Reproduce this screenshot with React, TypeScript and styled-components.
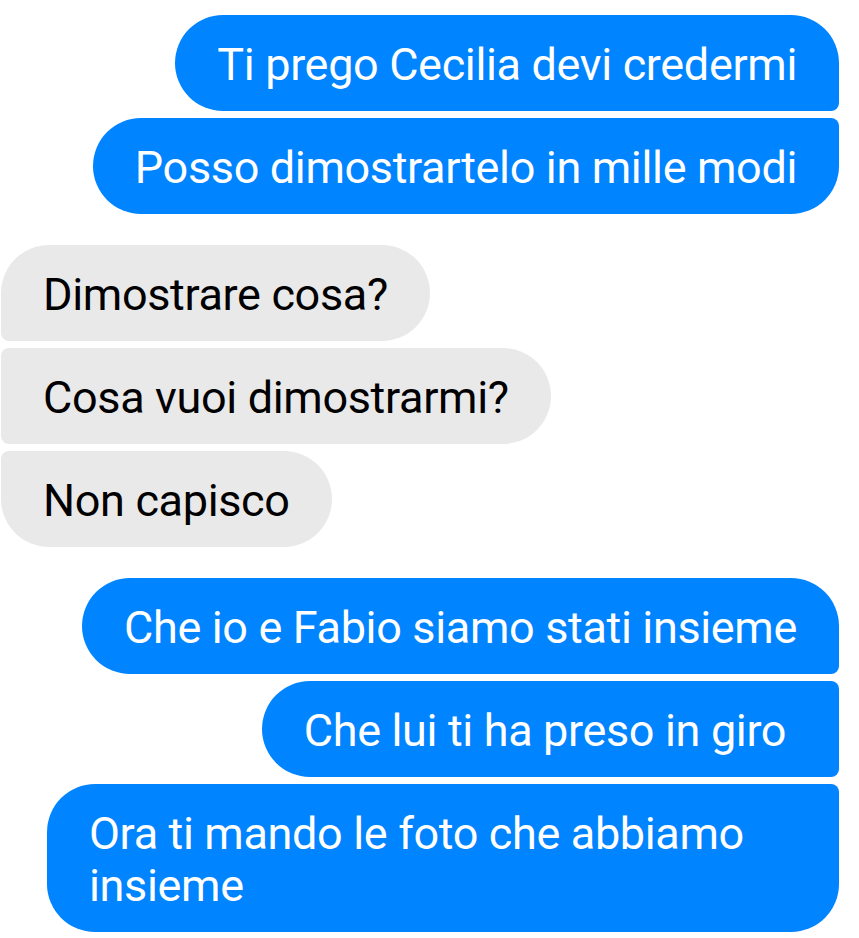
import React from 'react';
import styled, { createGlobalStyle, css } from 'styled-components';

const GlobalStyle = createGlobalStyle`
  html, body {
    margin: 0;
    padding: 0;
    background: #ffffff;
  }
  body {
    font-family: Roboto, "Noto Sans", "Liberation Sans", sans-serif;
  }
`;

type Side = 'me' | 'them';
type Pos = 'first' | 'middle' | 'last';

const BIG = 48;
const SMALL = 8;

const Thread = styled.div`
  width: 859px;
  height: 938px;
  box-sizing: border-box;
  padding: 15px 20px 0 1px;
  display: flex;
  flex-direction: column;
  gap: 31px;
  overflow: hidden;
`;

const Group = styled.div<{ $side: Side }>`
  display: flex;
  flex-direction: column;
  gap: 7px;
  align-items: ${p => (p.$side === 'me' ? 'flex-end' : 'flex-start')};
`;

const radius = (side: Side, pos: Pos) => {
  const top = pos === 'first' ? BIG : SMALL;
  const bottom = pos === 'last' ? BIG : SMALL;
  if (side === 'me') {
    return css`border-radius: ${BIG}px ${top}px ${bottom}px ${BIG}px;`;
  }
  return css`border-radius: ${top}px ${BIG}px ${BIG}px ${bottom}px;`;
};

const Bubble = styled.div<{ $side: Side; $pos: Pos }>`
  box-sizing: border-box;
  max-width: 792px;
  padding: 24px 42px 20px 42px;
  font-size: 45px;
  line-height: 52px;
  letter-spacing: -0.35px;
  background: ${p => (p.$side === 'me' ? '#0084ff' : '#e9e9e9')};
  color: ${p => (p.$side === 'me' ? '#ffffff' : '#000000')};
  ${p => radius(p.$side, p.$pos)}
`;

const groups: { side: Side; lines: string[] }[] = [
  { side: 'me', lines: ['Ti prego Cecilia devi credermi', 'Posso dimostrartelo in mille modi'] },
  { side: 'them', lines: ['Dimostrare cosa?', 'Cosa vuoi dimostrarmi?', 'Non capisco'] },
  {
    side: 'me',
    lines: [
      'Che io e Fabio siamo stati insieme',
      'Che lui ti ha preso in giro\u00a0',
      'Ora ti mando le foto che abbiamo insieme',
    ],
  },
];

const posOf = (i: number, n: number): Pos => (i === 0 ? 'first' : i === n - 1 ? 'last' : 'middle');

export default function App() {
  return (
    <>
      <GlobalStyle />
      <Thread>
        {groups.map((g, gi) => (
          <Group key={gi} $side={g.side}>
            {g.lines.map((text, i) => (
              <Bubble key={i} $side={g.side} $pos={posOf(i, g.lines.length)}>
                {text}
              </Bubble>
            ))}
          </Group>
        ))}
      </Thread>
    </>
  );
}
